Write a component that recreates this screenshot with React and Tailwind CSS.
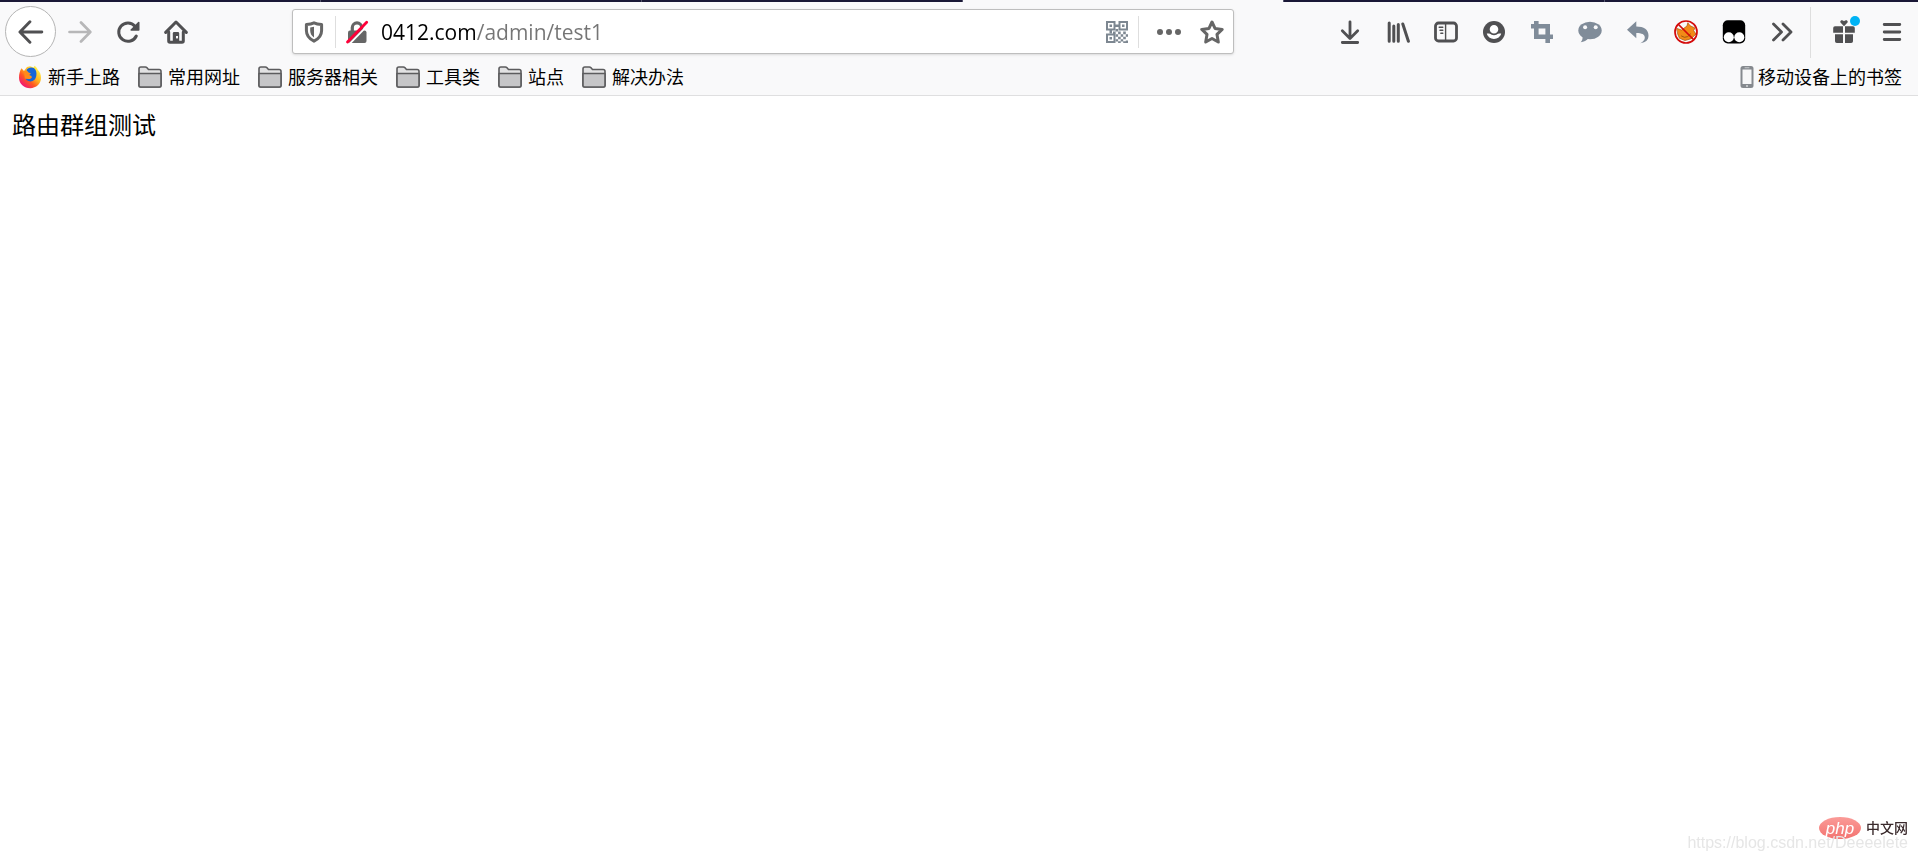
const Icon = ({ children, className = "" }) => (
  <svg
    viewBox="0 0 24 24"
    className={`h-6 w-6 shrink-0 ${className}`}
    fill="none"
    stroke="currentColor"
    strokeWidth="3"
    strokeLinecap="round"
    strokeLinejoin="round"
    aria-hidden="true"
  >
    {children}
  </svg>
);

const BackIcon = () => (
  <Icon className="h-[26px] w-[26px]">
    <path d="M2 12h20M11 2.5 1.8 12l9.2 9.5" strokeWidth="2.7" />
  </Icon>
);

const ForwardIcon = () => (
  <Icon>
    <path d="M1.5 12h20M13 2.5 22.3 12 13 21.5" strokeWidth="2.7" />
  </Icon>
);

const ReloadIcon = () => (
  <Icon>
    <path d="M20.3 16A9.2 9.2 0 1 1 19 6.200" />
    <path d="M22.7 2.500v7.500h-7.500z" fill="currentColor" strokeWidth="1.600" />
  </Icon>
);

const HomeIcon = () => (
  <Icon>
    <path d="M1.7 12.4 12 2l10.3 10.4" />
    <path d="M4.7 12v9q0 1.300 1.300 1.300h12q1.300 0 1.300-1.300v-9" />
    <path
      d="M10.200 12h3.600q1.400 0 1.400 1.400V22H8.800v-8.600q0-1.400 1.400-1.400z"
      fill="currentColor"
      stroke="none"
    />
    <rect x="12" y="16" width="2" height="2.400" fill="#f9f9fa" stroke="none" />
  </Icon>
);

const ShieldIcon = () => (
  <Icon>
    <path d="M12 2.800c2.200 1 4.600 1.400 7.600 1.600v6.200c0 5-3 8.400-7.600 10.600-4.600-2.200-7.600-5.600-7.600-10.600V4.400c3-.2 5.400-.6 7.600-1.600z" />
    <path
      d="M12 6.800v10.600c-2.600-1.600-3.800-4-3.800-6.900V7.600z"
      fill="currentColor"
      stroke="none"
    />
  </Icon>
);

const InsecureIcon = () => (
  <Icon>
    <path d="M7.300 11V7.600a4.700 4.700 0 0 1 9.400 0V11" strokeWidth="3.200" />
    <rect x="3" y="10.500" width="18.500" height="12.500" rx="2" fill="currentColor" stroke="none" />
    <path d="M4.500 24 23.600 4.300" stroke="#fff" strokeWidth="1.800" strokeLinecap="butt" />
    <path d="M2.500 22 21.700 2.300" stroke="#ff0039" strokeWidth="2.800" />
  </Icon>
);

const QrIcon = () => (
  <Icon>
    <g strokeWidth="2" strokeLinejoin="miter">
      <path d="M2 2h7.500v7.500H2zM14.500 2H22v7.500h-7.500zM2 14.500h7.500V22H2z" />
    </g>
    <g fill="currentColor" stroke="none">
      <path d="M4.500 4.500H7V7H4.500zM17 4.500h2.500V7H17zM4.500 17H7v2.500H4.500z" />
      <path d="M10 4.500h4V7h-4zM4.500 10H7v3.500H4.500zM10.500 9h2.600v2.600h-2.600zM8 11.500h2.600V14H8zM13.100 11.600h2.600v2.600h-2.600zM18.200 11.600h2.600v2.600h-2.600z" />
      <path d="M10.600 14.200h2.500v2.500h-2.500zM15.700 14.200h2.500v2.500h-2.500zM20.800 14.200H23v2.500h-2.200zM13.100 16.700h2.600v2.600h-2.600zM18.200 16.700h2.600v2.600h-2.600z" />
      <path d="M10.600 19.300h2.500v2.200h-2.500zM15.700 19.300h2.500v2.200h-2.500zM20.800 20.500H23V23h-2.200zM13.100 21.200h2.600V23h-2.600zM18.200 21.200h2.600V23h-2.600z" />
    </g>
  </Icon>
);

const DotsIcon = () => (
  <Icon>
    <g fill="currentColor" stroke="none">
      <circle cx="3" cy="12" r="3" />
      <circle cx="12" cy="12" r="3" />
      <circle cx="21" cy="12" r="3" />
    </g>
  </Icon>
);

const StarIcon = () => (
  <Icon>
    <path
      d="m12 2 3 6.400 7.200 1-5.200 5 1.300 7.600-6.300-3.500L5.700 22 7 14.400l-5.200-5 7.200-1z"
      strokeWidth="3"
    />
  </Icon>
);

const DownloadIcon = () => (
  <Icon>
    <path d="M12 1.800v16M4.300 10.800l7.700 7.700 7.700-7.700M4.300 22.500h15.400" strokeWidth="2.800" />
  </Icon>
);

const LibraryIcon = () => (
  <Icon>
    <path d="M3.200 3v18.200M7.800 6v15.200M12.300 4.500v16.700M16.800 4l5.600 17.200" strokeWidth="3" />
  </Icon>
);

const SidebarIcon = () => (
  <Icon>
    <rect x="1.500" y="3" width="21" height="18" rx="3" strokeWidth="2.800" />
    <path d="M11.600 3.500v17" strokeWidth="1.400" />
    <path d="M5.200 7.300h3.600M6 10.300h2.800M6.800 13.300h2" strokeWidth="1.400" />
  </Icon>
);

const AccountIcon = () => (
  <Icon>
    <circle cx="12" cy="12" r="11" fill="currentColor" stroke="none" />
    <path
      d="M4.800 13.500h14.400c-.8 3.200-3.600 5.400-7.200 5.400s-6.400-2.200-7.200-5.400z"
      fill="#fff"
      stroke="none"
    />
    <circle cx="12" cy="9.200" r="5.200" fill="#fff" strokeWidth="1.800" />
  </Icon>
);

const CropIcon = () => (
  <Icon>
    <path d="M6.300 1v15.800H23M1 6.300h16.700V23" strokeWidth="4.600" strokeLinecap="butt" strokeLinejoin="miter" />
  </Icon>
);

const ChatIcon = () => (
  <Icon>
    <g stroke="none">
      <ellipse cx="12" cy="10.500" rx="11.700" ry="8.700" fill="currentColor" />
      <path d="M4.500 16c.4 2.400-.3 4.600-1.800 6.200 3-.5 5.900-1.600 7.900-3.900z" fill="currentColor" />
      <circle cx="7.100" cy="7.200" r="2" fill="#f9f9fa" />
      <circle cx="17.700" cy="7.200" r="2" fill="#f9f9fa" />
    </g>
  </Icon>
);

const UndoIcon = () => (
  <Icon>
    <path
      d="M10.300 1.200v5.300c7.600 0 12.200 3.200 12.200 9 0 4.200-2.300 7-8.200 7.700 3.100-1.600 4.500-3.400 4.500-5.700 0-2.900-3-4.400-8.500-4.400v5.200L1 9.800z"
      fill="currentColor"
      stroke="none"
    />
  </Icon>
);

const BlockedIcon = () => (
  <Icon>
    <path
      d="M3 8.500 7.500 10 13 6l.8-3.200 2.400 3L21 8l-1.400 2.600L22 14l-4.800 4.700L11 20.500l-5.500-2.200-1.700-4z"
      fill="#f28a17"
      stroke="#a8560c"
      strokeWidth=".7"
    />
    <path d="m7.500 16 3 1.300 3.200-.7 2.800-2.700" stroke="#8a4a0c" strokeWidth=".8" />
    <circle cx="12" cy="12" r="11" stroke="#d40a0a" strokeWidth="1.700" />
    <path d="m4.500 4.500 15 15" stroke="#d40a0a" strokeWidth="1.700" />
  </Icon>
);

const MonkeyIcon = () => (
  <Icon>
    <g stroke="none">
      <rect x=".8" y=".3" width="22.400" height="23.200" rx="5" fill="#000" />
      <circle cx="6.800" cy="17.300" r="5" fill="#fff" />
      <circle cx="17.300" cy="17.300" r="5" fill="#fff" />
    </g>
  </Icon>
);

const OverflowIcon = () => (
  <Icon>
    <path d="m3.500 4 8 8-8 8M13 4l8 8-8 8" strokeWidth="2.800" />
  </Icon>
);

const GiftIcon = () => (
  <Icon>
    <g fill="currentColor" stroke="none">
      <path d="M3 6.200h8v6.600H1.200V8q0-1.800 1.800-1.800zM13 6.200h8q1.800 0 1.800 1.800v4.800H13z" />
      <path d="M3 14.300h8V23H4.800Q3 23 3 21.200zM13 14.300h8v6.900q0 1.800-1.800 1.800H13z" />
      <path d="M12 6.200 8.500 2.500c-.9-2 1.700-3.200 3.500-1.200 1.800-2 4.400-.8 3.500 1.200z" />
    </g>
  </Icon>
);

const MenuIcon = () => (
  <Icon>
    <path d="M4.200 4.500h15.600M4.200 12h15.600M4.200 19.500h15.600" strokeWidth="2.800" />
  </Icon>
);

const FolderIcon = () => (
  <Icon>
    <path
      d="M1 20.500V3.800Q1 2 2.800 2h4.500q1 0 1.700.8L10.500 4.500h10.700Q23 4.500 23 6.300v14.200q0 1.500-1.500 1.500h-19Q1 22 1 20.500z"
      fill="#e2e2e3"
      strokeWidth="1.600"
    />
    <path
      d="M1 20.500V8.500h22v12q0 1.500-1.500 1.500h-19Q1 22 1 20.500z"
      fill="#c6c6c8"
      strokeWidth="1.600"
    />
  </Icon>
);

const FirefoxIcon = () => (
  <svg viewBox="0 0 24 24" className="h-6 w-6 shrink-0" aria-hidden="true">
    <defs>
      <linearGradient id="fox" x1=".85" y1=".1" x2=".15" y2=".9">
        <stop offset="0" stopColor="#fff44f" />
        <stop offset=".4" stopColor="#ffb01f" />
        <stop offset=".65" stopColor="#ff5a1f" />
        <stop offset="1" stopColor="#f0127a" />
      </linearGradient>
    </defs>
    <path
      d="M3.500 3.300 6 6l3-4 3-.8 3.800 1.200L16.500.8c1.500 1 2.600 2.400 3.200 4 2.200 2 3.300 4.800 3.300 8C23 18.800 18.200 23.200 12.200 23.200S1 18.700 1 12.700c0-3.500.8-6.700 2.500-9.400z"
      fill="url(#fox)"
    />
    <path
      d="M8.500 5.200C10 2.500 13 1.700 15.800 3c2.400 1.700 3 4.600 2.500 7.800-.6 4-3.300 5.800-6 5.600-2.700-.2-4.700-1.700-5.400-4.200l4.500.8 2.600-1.800-3-1.200 1.800-1.800-2.500-.6z"
      fill="#1565d8"
    />
    <path d="M6 6.500 9 6l1.200 1.800 2.300.4-2 2 .8 1.500 2.700.3c-.6 1.600-2 2.200-3.500 2l-3.700-.3z" fill="#ff8a1a" />
  </svg>
);

const PhoneIcon = () => (
  <svg viewBox="0 0 14 24" className="h-6 w-[14px] shrink-0" aria-hidden="true">
    <rect x=".5" y="1" width="13" height="22" rx="2.500" fill="#85898e" />
    <rect x="2.500" y="4.500" width="9" height="14.500" fill="#f7f7f8" />
    <rect x="4.500" y="2.300" width="5" height="1" rx=".5" fill="#c7cacd" />
    <circle cx="7" cy="21" r="1" fill="#d5d7d9" />
  </svg>
);

const ToolButton = ({ label, className = "", children }) => (
  <button
    type="button"
    aria-label={label}
    className={`relative flex h-12 w-12 shrink-0 items-center justify-center ${className}`}
  >
    {children}
  </button>
);

const tools = [
  { label: "下载", icon: DownloadIcon },
  { label: "我的足迹", icon: LibraryIcon },
  { label: "侧栏", icon: SidebarIcon },
  { label: "账户", icon: AccountIcon },
  { label: "截图", icon: CropIcon, color: "text-[#808c99]" },
  { label: "聊天", icon: ChatIcon, color: "text-[#808c99]" },
  { label: "撤销", icon: UndoIcon, color: "text-[#808c99]" },
  { label: "拦截", icon: BlockedIcon },
  { label: "脚本", icon: MonkeyIcon },
  { label: "更多工具", icon: OverflowIcon },
];

const folders = ["常用网址", "服务器相关", "工具类", "站点", "解决办法"];

const TabStrip = () => (
  <div className="flex h-[2px] gap-px bg-[#55556d]">
    <span className="w-80 bg-[#1a1836]" />
    <span className="w-80 bg-[#1a1836]" />
    <span className="w-80 bg-[#1a1836]" />
    <span className="w-80 bg-[#f9f9fa]" />
    <span className="w-80 bg-[#1a1836]" />
    <span className="flex-1 bg-[#1a1836]" />
  </div>
);

const UrlBar = () => (
  <div className="mx-[92px] mb-px flex h-[45px] min-w-0 flex-1 items-center rounded-[3px] border border-[#bebebe] bg-white pt-px text-[#666] shadow-sm">
    <button type="button" aria-label="跟踪保护" className="flex w-[42px] shrink-0 justify-center">
      <ShieldIcon />
    </button>
    <span className="h-8 w-px shrink-0 bg-[#dedede]" />
    <button type="button" aria-label="连接不安全" className="flex w-[42px] shrink-0 justify-center">
      <InsecureIcon />
    </button>
    <input
      type="text"
      aria-label="地址"
      defaultValue="0412.com/admin/test1"
      className="ml-[3px] h-10 min-w-0 flex-1 bg-linear-to-r from-black from-[96px] to-[#757575] to-[96px] bg-clip-text text-[21px] text-transparent caret-black outline-none"
    />
    <button type="button" aria-label="二维码" className="flex w-[42px] shrink-0 justify-center text-[#7d8791]">
      <QrIcon />
    </button>
    <span className="h-8 w-px shrink-0 bg-[#dedede]" />
    <button type="button" aria-label="页面操作" className="ml-2 flex w-11 shrink-0 justify-center">
      <DotsIcon />
    </button>
    <button type="button" aria-label="收藏" className="flex w-[42px] shrink-0 justify-center">
      <StarIcon />
    </button>
  </div>
);

const NavBar = () => (
  <div className="flex h-[60px] items-center pr-[2px] pl-[5px] text-[#505052]">
    <button
      type="button"
      aria-label="后退"
      className="mb-px flex h-[51px] w-[51px] shrink-0 items-center justify-center rounded-full border border-[#b5b5b5] bg-white"
    >
      <BackIcon />
    </button>
    <ToolButton label="前进" className="text-[#b7b7b8]">
      <ForwardIcon />
    </ToolButton>
    <ToolButton label="刷新">
      <ReloadIcon />
    </ToolButton>
    <ToolButton label="主页">
      <HomeIcon />
    </ToolButton>

    <UrlBar />

    {tools.map(({ label, icon: ToolIcon, color }) => (
      <ToolButton key={label} label={label} className={color}>
        <ToolIcon />
      </ToolButton>
    ))}
    <span className="mr-[9px] ml-1 h-[51px] w-px shrink-0 bg-[#dedede]" />
    <ToolButton label="新功能">
      <GiftIcon />
      <span className="absolute top-2 right-2 h-[10px] w-[10px] rounded-full bg-[#00b3f4]" />
    </ToolButton>
    <ToolButton label="菜单">
      <MenuIcon />
    </ToolButton>
  </div>
);

const BookmarksBar = () => (
  <div className="flex h-[34px] items-center justify-between border-b border-[#dfdfe0] pr-4 pb-[3px] pl-[18px] text-[18px] leading-6">
    <div className="flex gap-[18px]">
      <a href="#start" className="flex items-center gap-[6px]">
        <FirefoxIcon />
        新手上路
      </a>
      {folders.map((name) => (
        <button key={name} type="button" className="flex items-center gap-[6px]">
          <span className="text-[#5c5c5e]">
            <FolderIcon />
          </span>
          {name}
        </button>
      ))}
    </div>
    <button type="button" className="flex items-center gap-1">
      <PhoneIcon />
      移动设备上的书签
    </button>
  </div>
);

const Watermark = () => (
  <div className="fixed right-[10px] bottom-[10px] flex flex-col items-end">
    <div className="flex items-center gap-[5px]">
      <span className="flex h-[22px] w-[42px] items-center justify-center rounded-[50%] bg-linear-to-b from-[#fa9b98] to-[#f37370] font-['Liberation_Sans'] text-[17px] leading-none text-white italic">
        php
      </span>
      <span className="text-[14px] leading-5 font-medium text-[#3a2a2c]">中文网</span>
    </div>
    <span className="-mt-1 font-['Liberation_Sans'] text-[16px] leading-4 text-[#e6e6e6]">
      https://blog.csdn.net/Deeeelete
    </span>
  </div>
);

const App = () => {
  return (
    <div className="min-h-screen bg-white font-['Open_Sans','Noto_Sans_CJK_SC',sans-serif] text-black">
      <header className="bg-[#f9f9fa]">
        <TabStrip />
        <NavBar />
        <BookmarksBar />
      </header>
      <main className="px-3 py-[11px] text-[24px] leading-9">路由群组测试</main>
      <Watermark />
    </div>
  );
};

export default App;
